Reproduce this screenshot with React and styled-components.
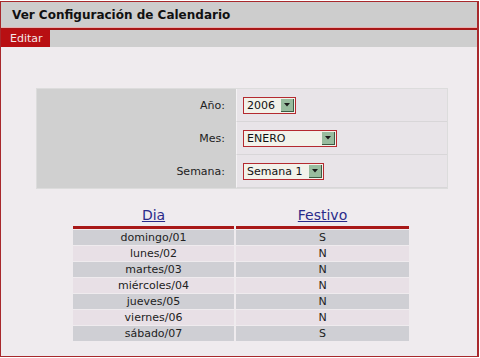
import React from 'react'
import styled, { createGlobalStyle } from 'styled-components';

const GlobalStyle = createGlobalStyle`
  html, body { margin: 0; padding: 0; background: #ffffff; }
  body { font-family: "DejaVu Sans", Verdana, sans-serif; }
`;

const dias = [
  { dia: 'domingo/01', festivo: 'S' },
  { dia: 'lunes/02', festivo: 'N' },
  { dia: 'martes/03', festivo: 'N' },
  { dia: 'miércoles/04', festivo: 'N' },
  { dia: 'jueves/05', festivo: 'N' },
  { dia: 'viernes/06', festivo: 'N' },
  { dia: 'sábado/07', festivo: 'S' },
];

const campos = [
  { label: 'Año:', value: '2006', width: 53 },
  { label: 'Mes:', value: 'ENERO', width: 94 },
  { label: 'Semana:', value: 'Semana 1', width: 81 },
];

const Arrow = () => (
  <svg width="6" height="4" viewBox="0 0 6 4">
    <path d="M0 0 H6 L3 3.5 Z" fill="#1a1a1a" />
  </svg>
);

const App = () => {
  return (
    <>
      <GlobalStyle />
      <Frame>
        <TitleBar>Ver Configuración de Calendario</TitleBar>
        <TabStrip>
          <Tab>Editar</Tab>
        </TabStrip>
        <Body>
          <Form>
            {campos.map((c) => (
              <React.Fragment key={c.label}>
                <Label>{c.label}</Label>
                <Value>
                  <Select $w={c.width}>
                    <span>{c.value}</span>
                    <ArrowBtn><Arrow /></ArrowBtn>
                  </Select>
                </Value>
              </React.Fragment>
            ))}
          </Form>
          <Table>
            <colgroup>
              <col style={{ width: 161 }} />
              <col />
            </colgroup>
            <thead>
              <tr>
                <Th><a href="#">Dia</a></Th>
                <Th><a href="#">Festivo</a></Th>
              </tr>
            </thead>
            <tbody>
              {dias.map((d, i) => (
                <Row key={d.dia} $odd={i % 2 === 1}>
                  <Td>{d.dia}</Td>
                  <Td>{d.festivo}</Td>
                </Row>
              ))}
            </tbody>
          </Table>
        </Body>
      </Frame>
    </>
  )
}

const Frame = styled.div`
  width: 476px;
  height: 354px;
  margin: 1px 0 0 0;
  border: 1px solid #a8282c;
  border-right-width: 2px;
  background: #efebee;
  display: flex;
  flex-direction: column;
`;

const TitleBar = styled.div`
  height: 25px;
  background: #cdcdcd;
  border-bottom: 1px solid #e8b0b0;
  display: flex;
  align-items: center;
  padding-left: 11px;
  font-size: 12px;
  font-weight: bold;
  color: #111;
`;

const TabStrip = styled.div`
  height: 17px;
  background: #cecece;
  border-top: 2px solid #a81818;
  display: flex;
`;

const Tab = styled.div`
  width: 49px;
  margin-top: -1px;
  background: #b80f12;
  color: #f4e6e6;
  font-size: 11px;
  padding-left: 9px;
  box-sizing: border-box;
  display: flex;
  align-items: center;
`;

const Body = styled.div`
  flex: 1;
  padding: 41px 0 0 35px;
  display: flex;
  flex-direction: column;
`;

const Form = styled.div`
  width: 410px;
  display: grid;
  grid-template-columns: 199px 1fr;
  grid-auto-rows: 33px;
  background: #d0d0d0;
  border: 1px solid #dcdcdc;
`;

const Label = styled.div`
  display: flex;
  align-items: center;
  justify-content: flex-end;
  padding-right: 11px;
  font-size: 11px;
  color: #222;
`;

const Value = styled.div`
  background: #e8e4e8;
  border-left: 1px solid #f4f2f4;
  border-bottom: 1px solid #d8d6d8;
  display: flex;
  align-items: center;
  padding-left: 6px;
`;

const Select = styled.div`
  width: ${(p) => p.$w}px;
  height: 17px;
  box-sizing: border-box;
  border: 1px solid #b42a30;
  background: #f2f2ea;
  display: flex;
  align-items: stretch;
  font-size: 11px;
  color: #111;
  span {
    flex: 1;
    display: flex;
    align-items: center;
    padding-left: 3px;
  }
`;

const ArrowBtn = styled.div`
  width: 12px;
  margin: 1px 1px 1px 0;
  background: #98bc9e;
  border-right: 1px solid #3c5c44;
  border-bottom: 1px solid #3c5c44;
  display: flex;
  align-items: center;
  justify-content: center;
`;

const Table = styled.table`
  width: 340px;
  margin: 17px 0 0 35px;
  border-collapse: separate;
  border-spacing: 2px 1px;
  table-layout: fixed;
  font-size: 11px;
  color: #222;
`;

const Th = styled.th`
  font-weight: normal;
  font-size: 14px;
  padding: 0 0 3px 0;
  border-bottom: 3px solid #a81818;
  a {
    color: #2a2a8a;
    text-decoration: underline;
  }
`;

const Row = styled.tr`
  background: ${(p) => (p.$odd ? '#e8e0e6' : '#cfcfd4')};
`;

const Td = styled.td`
  text-align: center;
  height: 15px;
  padding: 0;
  line-height: 15px;
`;

export default App
